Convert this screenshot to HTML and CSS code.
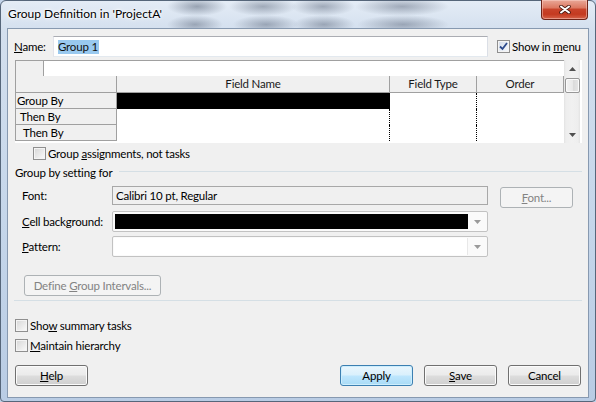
FILE: index.html
```html
<!DOCTYPE html>
<html lang="en">
<head>
<meta charset="utf-8">
<title>Group Definition</title>
<link rel="stylesheet" href="styles.css">
</head>
<body>
<div class="window">
  <div class="titlebar">
    <span class="title">Group Definition in 'ProjectA'</span>
    <div class="close-btn">
      <svg width="12" height="9" viewBox="0 0 12 9"><path d="M2 1.5 L10 7.5 M10 1.5 L2 7.5" stroke="#4a1a12" stroke-width="3.6" stroke-linecap="round"/><path d="M2 1.5 L10 7.5 M10 1.5 L2 7.5" stroke="#ffffff" stroke-width="2" stroke-linecap="round"/></svg>
    </div>
  </div>
  <div class="client">
    <div class="name-row">
      <span class="name-label"><u>N</u>ame:</span>
      <div class="textbox name-input"><span class="selected-text">Group 1</span></div>
      <span class="check-row menu-check"><span class="checkbox checked"><svg width="11" height="11" viewBox="0 0 11 11"><path d="M2 5.5 L4.5 8 L9 2" fill="none" stroke="#2c4a8c" stroke-width="1.8"/></svg></span><span>Show in <u>m</u>enu</span></span>
    </div>

    <div class="grid">
      <div class="grid-main">
        <div class="edit-row"><div class="edit-corner"></div><div class="edit-field"></div></div>
        <div class="grid-table">
          <div class="gh gh-corner"></div>
          <div class="gh">Field Name</div>
          <div class="gh">Field Type</div>
          <div class="gh">Order</div>

          <div class="rh lvl0">Group By</div>
          <div class="gc gc-dot gc-selected"></div>
          <div class="gc gc-dot"></div>
          <div class="gc"></div>

          <div class="rh lvl1">Then By</div>
          <div class="gc gc-dot"></div>
          <div class="gc gc-dot"></div>
          <div class="gc"></div>

          <div class="rh lvl2">Then By</div>
          <div class="gc gc-dot"></div>
          <div class="gc gc-dot"></div>
          <div class="gc"></div>
        </div>
      </div>
      <div class="vscroll">
        <div class="sb-arrow"><svg width="7" height="4" viewBox="0 0 7 4"><path d="M0 4 L3.5 0 L7 4 Z" fill="#505050"/></svg></div>
        <div class="sb-track"><div class="sb-thumb"></div></div>
        <div class="sb-arrow"><svg width="7" height="4" viewBox="0 0 7 4"><path d="M0 0 L7 0 L3.5 4 Z" fill="#505050"/></svg></div>
      </div>
    </div>

    <div class="check-row assign"><span class="checkbox"></span><span>Group <u>a</u>ssignments, not tasks</span></div>

    <div class="group-head"><span>Group by setting for</span><span class="rule"></span></div>

    <div class="form-row font-row">
      <span class="form-label">Font:</span>
      <div class="ro-box">Calibri 10 pt, Regular</div>
      <div class="btn disabled font-btn"><span><u>F</u>ont...</span></div>
    </div>

    <div class="form-row combo-row cell-row">
      <span class="form-label"><u>C</u>ell background:</span>
      <div class="combo"><div class="combo-fill black"></div><div class="combo-arrow"><svg width="7" height="4" viewBox="0 0 7 4"><path d="M0 0 L7 0 L3.5 4 Z" fill="#9a9a9a"/></svg></div></div>
    </div>

    <div class="form-row combo-row pattern-row">
      <span class="form-label"><u>P</u>attern:</span>
      <div class="combo"><div class="combo-fill white"></div><div class="combo-arrow"><svg width="7" height="4" viewBox="0 0 7 4"><path d="M0 0 L7 0 L3.5 4 Z" fill="#9a9a9a"/></svg></div></div>
    </div>

    <div class="btn disabled define-btn"><span>Define <u>G</u>roup Intervals...</span></div>

    <div class="separator"></div>

    <div class="check-row summary"><span class="checkbox"></span><span>Sho<u>w</u> summary tasks</span></div>
    <div class="check-row hierarchy"><span class="checkbox"></span><span><u>M</u>aintain hierarchy</span></div>

    <div class="button-row">
      <div class="btn"><span><u>H</u>elp</span></div>
      <div class="spacer"></div>
      <div class="btn default"><span>Apply</span></div>
      <div class="btn"><span><u>S</u>ave</span></div>
      <div class="btn"><span>Cancel</span></div>
    </div>
  </div>
</div>
</body>
</html>
```

FILE: styles.css
```css
* { box-sizing: border-box; }
html, body { margin: 0; padding: 0; }
body {
  width: 596px;
  height: 402px;
  overflow: hidden;
  font-family: Lato, "Noto Sans", sans-serif;
  font-size: 11.5px;
  letter-spacing: -0.2px;
  color: #000;
  background: #c3d4ea;
}
u { text-decoration: underline; text-underline-offset: 1px; }

.window {
  width: 596px;
  height: 402px;
  display: flex;
  flex-direction: column;
  border: 1px solid #56667a;
  border-radius: 6px 6px 4px 4px;
  padding: 0 6px 3px 6px;
  background: linear-gradient(180deg, #e4ecf6 0, #d3dfee 30px, #c5d6ea 55%, #b9cce4 100%);
}

.titlebar {
  height: 27px;
  display: flex;
  justify-content: space-between;
  align-items: flex-start;
  padding-left: 1px;
  background:
    radial-gradient(closest-side, rgba(80,92,112,.5), rgba(80,92,112,0)) 160px -4px / 60px 19px no-repeat,
    radial-gradient(closest-side, rgba(80,92,112,.45), rgba(80,92,112,0)) 222px -4px / 68px 19px no-repeat,
    radial-gradient(closest-side, rgba(80,92,112,.45), rgba(80,92,112,0)) 284px -4px / 64px 19px no-repeat,
    radial-gradient(closest-side, rgba(80,92,112,.45), rgba(80,92,112,0)) 348px -4px / 94px 19px no-repeat,
    radial-gradient(closest-side, rgba(80,92,112,.45), rgba(80,92,112,0)) 160px 14px / 56px 19px no-repeat,
    radial-gradient(closest-side, rgba(80,92,112,.45), rgba(80,92,112,0)) 226px 14px / 66px 19px no-repeat,
    radial-gradient(closest-side, rgba(80,92,112,.45), rgba(80,92,112,0)) 286px 14px / 62px 19px no-repeat,
    radial-gradient(closest-side, rgba(80,92,112,.45), rgba(80,92,112,0)) 350px 14px / 92px 19px no-repeat;
}
.title {
  margin-top: 5px;
  line-height: 16px;
  font-size: 12px;
  letter-spacing: 0;
  color: #000;
  text-shadow: 0 0 6px #fff, 0 0 3px #fff, 0 0 2px #fff;
}
.close-btn {
  width: 47px;
  height: 20px;
  margin-top: -1px;
  margin-right: 1px;
  border: 1px solid #6e2418;
  border-top: none;
  border-radius: 0 0 4px 4px;
  background: linear-gradient(180deg, #e9a898 0%, #dd7a63 40%, #c8432a 50%, #c43a20 75%, #d5634a 100%);
  box-shadow: inset 0 0 0 1px rgba(255,220,210,.45);
  display: flex;
  align-items: center;
  justify-content: center;
}

.client {
  width: 582px;
  height: 370px;
  border: 1px solid #8799b0;
  background: #f0f0f0;
  display: flex;
  flex-direction: column;
}

/* name row */
.name-row {
  display: flex;
  align-items: center;
  height: 21px;
  margin-top: 7px;
  padding-left: 6px;
}
.name-label { width: 39px; flex: none; }
.textbox {
  background: #fff;
  border: 1px solid;
  border-color: #abadb3 #dbdfe6 #e3e9ef #e2e3ea;
}
.name-input {
  width: 435px;
  height: 21px;
  padding-left: 4px;
  display: flex;
  align-items: center;
  flex: none;
}
.selected-text {
  background: #99c9ef;
  color: #101010;
  line-height: 14px;
  padding: 0 1px 0 0;
}
.menu-check { margin-left: 9px; white-space: nowrap; }

/* checkbox */
.check-row {
  display: flex;
  align-items: center;
  gap: 2px;
  height: 15px;
}
.checkbox {
  width: 13px;
  height: 13px;
  border: 1px solid #8f8f8f;
  background: linear-gradient(135deg, #d6d6d6 0%, #ececec 60%, #fbfbfb 100%);
  box-shadow: inset 0 0 0 1px #f4f4f4;
  display: flex;
  align-items: center;
  justify-content: center;
  flex: none;
}
.checkbox.checked {
  background: linear-gradient(135deg, #cfd9e8 0%, #e9eef6 60%, #f7f9fc 100%);
}

/* grid */
.grid {
  display: flex;
  width: 567px;
  height: 83px;
  margin: 3px 0 0 7px;
  background: #fff;
}
.grid-main {
  width: 549px;
  border-top: 1px solid #a0a0a0;
  display: flex;
  flex-direction: column;
}
.edit-row { height: 15px; display: flex; }
.edit-corner {
  width: 29px;
  background: #f0f0f0;
  border-left: 1px solid #a0a0a0;
  border-right: 1px solid #a0a0a0;
}
.edit-field { flex: 1; background: #fff; }
.grid-table {
  display: grid;
  grid-template-columns: 102px 273px 87px 87px;
  grid-template-rows: 17px 16px 16px 16px;
}
.gh {
  background: #f0f0f0;
  border-right: 1px solid #a0a0a0;
  border-bottom: 1px solid #a0a0a0;
  text-align: center;
  line-height: 16px;
  color: #1a1a1a;
}
.gh-corner { border-left: 1px solid #a0a0a0; }
.rh {
  background: #f0f0f0;
  border-left: 1px solid #a0a0a0;
  border-right: 1px solid #a0a0a0;
  border-bottom: 1px solid #a0a0a0;
  line-height: 15px;
  white-space: nowrap;
}
.lvl0 { padding-left: 1px; }
.lvl1 { padding-left: 4px; }
.lvl2 { padding-left: 7px; }
.gc { background: #fff; }
.gc-dot { border-right: 1px dotted #000; }
.gc-selected { background: #000; }

.vscroll {
  width: 16px;
  margin-right: 2px;
  display: flex;
  flex-direction: column;
  background: linear-gradient(90deg, #e3e3e3 0, #eeeeee 2px, #f1f1f1 50%, #eeeeee 14px, #e3e3e3 100%);
}
.sb-arrow {
  height: 17px;
  display: flex;
  align-items: center;
  justify-content: center;
}
.sb-track { flex: 1; padding-top: 1px; }
.sb-thumb {
  width: 15px;
  height: 15px;
  margin-left: 1px;
  border: 1px solid #979797;
  border-radius: 2px;
  background: linear-gradient(90deg, #f3f3f3 0%, #e8e8e8 50%, #d9d9d9 51%, #e6e6e6 100%);
  box-shadow: inset 0 0 0 1px #fafafa;
}

/* assign */
.assign { margin-top: 3px; padding-left: 25px; }

.group-head {
  display: flex;
  align-items: center;
  height: 15px;
  margin-top: 4px;
  padding: 0 6px 0 7px;
}
.rule {
  flex: 1;
  height: 1px;
  background: #d5dfe5;
  margin-left: 7px;
  margin-top: -2px;
}

/* form rows */
.form-row {
  display: flex;
  align-items: center;
  padding-left: 14px;
}
.form-label { width: 90px; flex: none; }
.font-row {
  margin-top: 6px;
  height: 20px;
  align-items: flex-start;
}
.font-row .form-label { line-height: 19px; }
.ro-box {
  width: 376px;
  height: 19px;
  border: 1px solid #a8a8a8;
  background: #f0f0f0;
  padding-left: 3px;
  line-height: 17px;
}
.font-btn { margin-left: 12px; width: 72px; height: 20px; margin-top: 1px; }

.combo-row { height: 21px; }
.cell-row { margin-top: 5px; }
.pattern-row { margin-top: 4px; }
.combo {
  width: 376px;
  height: 21px;
  border: 1px solid #c2c2c2;
  border-radius: 2px;
  background: #fafafa;
  display: flex;
  padding: 2px 1px 2px 2px;
}
.combo-fill { flex: 1; }
.combo-fill.black { background: #000; }
.combo-fill.white { background: #fff; border-right: 1px solid #e8e8e8; margin: -1px 0 -1px -1px; }
.combo-arrow {
  width: 18px;
  display: flex;
  align-items: center;
  justify-content: center;
}

/* buttons */
.btn {
  width: 73px;
  height: 21px;
  border: 1px solid #707070;
  border-radius: 3px;
  background: linear-gradient(180deg, #f2f2f2 0%, #ebebeb 48%, #dddddd 52%, #cfcfcf 100%);
  box-shadow: inset 0 0 0 1px #fbfbfb;
  display: flex;
  align-items: center;
  justify-content: center;
  color: #000;
  white-space: nowrap;
  flex: none;
}
.btn.disabled {
  border-color: #adb2b5;
  background: #f4f4f4;
  box-shadow: none;
  color: #838383;
}
.btn.default {
  border-color: #3c7fb1;
  background: linear-gradient(180deg, #eaf6fd 0%, #d9f0fc 48%, #bee6fd 52%, #a9dbf6 100%);
  box-shadow: inset 0 0 0 1px #cdeefd;
}
.define-btn {
  width: 137px;
  margin-top: 18px;
  margin-left: 16px;
}

.separator {
  height: 1px;
  margin: 4px 6px 0 6px;
  background: #d5dfe5;
}
.summary { margin-top: 17px; padding-left: 7px; }
.hierarchy { margin-top: 5px; padding-left: 7px; }

.button-row {
  display: flex;
  height: 21px;
  margin-top: 12px;
  padding: 0 7px;
}
.spacer { flex: 1; }
.button-row .btn + .btn { margin-left: 11px; }
```
